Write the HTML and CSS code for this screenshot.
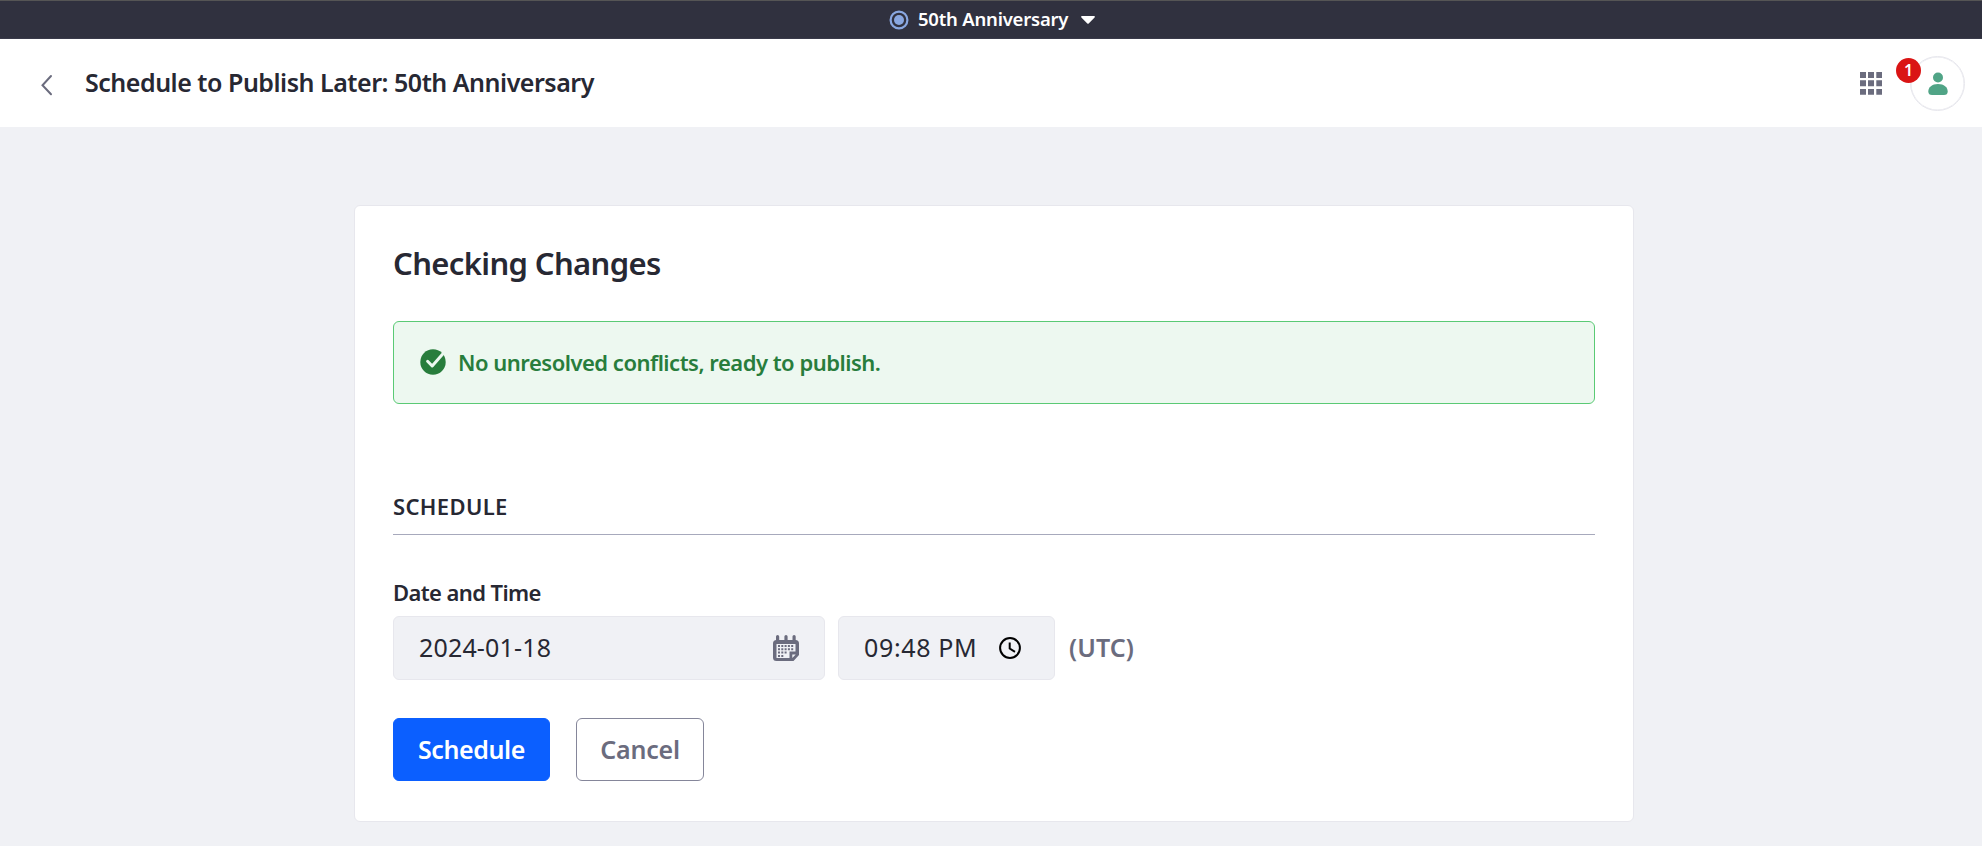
FILE: index.html
```html
<!DOCTYPE html>
<html lang="en">
<head>
<meta charset="utf-8">
<title>Schedule to Publish Later: 50th Anniversary</title>
<link rel="stylesheet" href="styles.css">
</head>
<body>
<div class="publication-bar">
  <svg class="publication-icon" width="20" height="20" viewBox="0 0 20 20"><circle cx="10" cy="10" r="8.4"/><circle class="dot" cx="10" cy="10" r="5"/></svg>
  <span class="publication-name">50th Anniversary</span>
  <svg class="caret" width="14" height="8" viewBox="0 0 14 8"><path d="M1 0h12c.9 0 1.200.8.6 1.400L7.700 7.500c-.4.4-1 .4-1.400 0L.4 1.400C-.2.8.1 0 1 0z"/></svg>
</div>
<header class="header">
  <a class="back"><svg width="13" height="22" viewBox="0 0 13 22"><path d="M11 2L2.500 11.200L11 20.300"/></svg></a>
  <h1 class="title">Schedule to Publish Later: 50th Anniversary</h1>
  <svg class="apps" width="22" height="23" viewBox="0 0 22 23"><path d="M0 0h6v6H0zM8 0h6v6H8zM16.300 0h5.700v6h-5.700zM0 8.300h6v6H0zM8 8.300h6v6H8zM16.300 8.300h5.700v6h-5.700zM0 17h6v5.700H0zM8 17h6v5.700H8zM16.300 17h5.700v5.700h-5.700z"/></svg>
  <div class="avatar">
    <svg width="20" height="24" viewBox="0 0 20 24"><circle cx="10" cy="5.500" r="5"/><path d="M10 12c6 0 9.700 3.200 9.700 7.500 0 2.500-1.300 3.500-3.700 3.500H4C1.600 23 .3 22 .3 19.500.3 15.200 4 12 10 12z"/></svg>
    <span class="badge">1</span>
  </div>
</header>
<main class="card">
  <h2 class="card-title">Checking Changes</h2>
  <div class="alert">
    <svg width="26" height="26" viewBox="0 0 26 26"><circle cx="13" cy="13" r="12.700"/><path class="check" d="M7.600 12.300L12.200 17L22.500 5.300"/></svg>
    <span>No unresolved conflicts, ready to publish.</span>
  </div>
  <h3 class="section-title">SCHEDULE</h3>
  <div class="label">Date and Time</div>
  <div class="fields">
    <div class="field date"><span>2024-01-18</span>
      <svg width="26" height="26" viewBox="0 0 26 26"><path d="M3.500 5h19A3.500 3.500 0 0 1 26 8.500V20l-5.500 6h-17A3.500 3.500 0 0 1 0 22.500v-14A3.500 3.500 0 0 1 3.500 5z"/><path d="M3 1.500a1.600 1.500 0 0 1 3.200 0V7H3zM11.400 1.500a1.600 1.500 0 0 1 3.200 0V7h-3.200zM19.500 1.500a1.600 1.500 0 0 1 3.200 0V7h-3.200z"/><path class="paper" d="M3.500 9h19v7.500h-6V23h-13zM19.300 19.500h3.400l-3.400 3.500z"/><path d="M5 10h2v2H5zM8.300 10h2v2h-2zM11.600 10h2v2h-2zM14.900 10h2v2h-2zM18.200 10h2v2h-2zM5 13.300h2v2H5zM8.300 13.300h2v2h-2zM11.600 13.300h2v2h-2zM14.900 13.300h2v2h-2zM18.200 13.300h2v2h-2zM5 16.600h2v2H5zM8.300 16.600h2v2h-2zM11.600 16.600h2v2h-2zM5 19.900h2v2H5zM8.300 19.900h2v2h-2z"/></svg>
    </div>
    <div class="field time"><span>09:48 PM</span>
      <svg class="clock" width="22" height="22" viewBox="0 0 22 22"><circle cx="11" cy="11" r="9.900"/><path d="M10.700 5.500v6l5.300 3.300"/></svg>
    </div>
    <span class="zone">(UTC)</span>
  </div>
  <div class="actions">
    <button class="btn primary">Schedule</button>
    <button class="btn secondary">Cancel</button>
  </div>
</main>
</body>
</html>
```
FILE: styles.css
```css
* { box-sizing: border-box; }
body {
  margin: 0;
  min-height: 846px;
  background: #f0f1f5;
  color: #272833;
  font-family: "Noto Sans", "Open Sans", sans-serif;
  font-weight: 600;
}
svg { display: block; flex: none; }
h1, h2, h3 { margin: 0; font-weight: 600; white-space: nowrap; }

.publication-bar {
  display: flex;
  align-items: center;
  height: 39px;
  padding: 1px 0 0 888.5px;
  background: #30313f;
  border-top: 1px solid #555;
  border-bottom: 1px solid #393a4a;
  color: #fff;
}
.publication-icon { fill: none; stroke: #89a7e0; stroke-width: 2.2; }
.publication-icon .dot { fill: #89a7e0; stroke: none; }
.publication-name {
  margin: -2px 12.5px 0 9.5px;
  font-size: 18.5px;
  line-height: 26px;
  letter-spacing: -0.21px;
  white-space: nowrap;
}
.caret { fill: #fff; }

.header {
  display: flex;
  align-items: center;
  height: 88px;
  padding: 0 17px 0 40px;
  background: #fff;
}
.back { margin-top: 4px; }
.back svg { fill: none; stroke: #6b6c7e; stroke-width: 2; stroke-linecap: round; }
.title {
  margin: -2px auto 0 32px;
  font-size: 25px;
  line-height: 34px;
  letter-spacing: -0.48px;
}
.apps { fill: #6b6c7e; }
.avatar {
  position: relative;
  display: grid;
  place-items: center;
  width: 55px;
  height: 55px;
  margin-left: 28px;
  border: 1px solid #e7e7ed;
  border-radius: 50%;
  box-shadow: inset 0 0 0 .5px #e7e7ed;
}
.avatar svg { margin-top: 1px; fill: #50a486; }
.badge {
  position: absolute;
  left: -15px;
  top: 1px;
  width: 25px;
  height: 25px;
  border-radius: 50%;
  background: #da1414;
  color: #fff;
  font-size: 16px;
  line-height: 25px;
  text-align: center;
}

.card {
  width: 1280px;
  height: 617px;
  margin: 78px 0 0 354px;
  padding: 37px 38px 40px;
  background: #fff;
  border: 1px solid #e7e7ed;
  border-radius: 6px;
}
.card-title { font-size: 31px; line-height: 40px; letter-spacing: -0.64px; }
.alert {
  display: flex;
  align-items: center;
  gap: 12px;
  height: 83px;
  margin-top: 38px;
  padding-left: 26px;
  background: #edf8f0;
  border: 1px solid #5aca75;
  border-radius: 6px;
  color: #287d3c;
  font-size: 22px;
  letter-spacing: -0.5px;
}
.alert span { margin-top: -1px; }
.alert svg { margin-top: -2px; fill: #287d3c; }
.alert .check { fill: none; stroke: #edf8f0; stroke-width: 3; stroke-linejoin: round; stroke-linecap: round; }
.section-title {
  height: 43px;
  margin-top: 88px;
  border-bottom: 1px solid #a7a9bc;
  font-size: 22px;
  line-height: 29px;
  letter-spacing: 0.35px;
}
.label {
  margin: 42px 0 9px;
  font-size: 22px;
  line-height: 30px;
  letter-spacing: -0.6px;
}
.fields { display: flex; align-items: center; }
.field {
  display: flex;
  align-items: center;
  justify-content: space-between;
  height: 64px;
  padding: 0 25px 1px 25px;
  background: #f0f1f5;
  border: 1px solid #e7e7ed;
  border-radius: 6px;
  font-size: 25px;
  font-weight: 400;
  white-space: nowrap;
}
.field span { margin-top: -1px; }
.field svg { fill: #6b6c7e; }
.date { width: 432px; letter-spacing: 0.16px; }
.field .paper { fill: #f0f1f5; }
.time { width: 217px; margin-left: 13px; padding-right: 33px; letter-spacing: 0.65px; }
.field .clock { margin-top: 1px; fill: none; stroke: #000; stroke-width: 2; }
.zone { margin: -2px 0 0 14px; color: #6b6c7e; font-size: 25px; letter-spacing: 0.1px; }
.actions { display: flex; gap: 26px; margin-top: 38px; }
.btn {
  height: 63px;
  padding: 0;
  border: 1px solid #85869a;
  border-radius: 6px;
  background: #fff;
  color: #6b6c7e;
  font: 600 25px/61px "Noto Sans", sans-serif;
}
.primary { width: 157px; background: #0b5fff; border-color: #0b5fff; color: #fff; letter-spacing: -0.4px; }
.secondary { width: 128px; letter-spacing: -0.2px; }
```
